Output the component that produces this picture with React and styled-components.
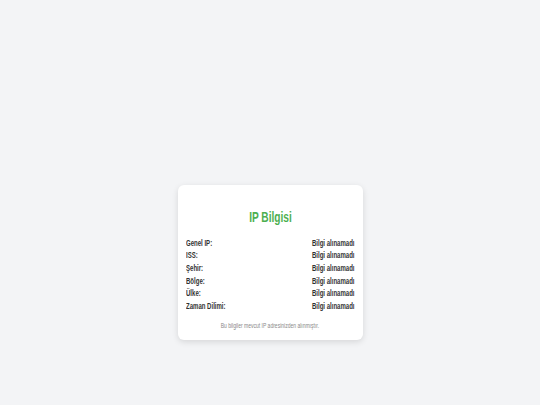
import React from 'react';
import styled, { createGlobalStyle } from 'styled-components';

const GlobalStyle = createGlobalStyle`
  html, body {
    margin: 0;
    padding: 0;
    background: #f3f4f6;
    font-family: "Liberation Sans Narrow", "Liberation Sans", Arial, sans-serif;
  }
`;

const Page = styled.div`
  min-height: 405px;
  display: flex;
  justify-content: center;
  align-items: flex-start;
  padding-top: 185px;
  box-sizing: border-box;
`;

const Card = styled.div`
  width: 185px;
  box-sizing: border-box;
  background: #ffffff;
  border-radius: 6px;
  box-shadow: 0 2px 6px rgba(0, 0, 0, 0.12);
  padding: 23px 8px 10px;
`;

// the reference uses a condensed face, so squeeze the text horizontally
const Squeezed = styled.span`
  display: inline-block;
  white-space: nowrap;
  transform: scaleX(${(p) => p.$scale || 0.67});
  transform-origin: ${(p) => p.$origin || 'left'} center;
`;

const Title = styled.h2`
  margin: 0 0 10.5px;
  text-align: center;
  color: #4caf50;
  font-size: 14.5px;
  font-weight: 700;
  line-height: 18px;
`;

const Row = styled.div`
  display: flex;
  justify-content: space-between;
  font-size: 9px;
  font-weight: 700;
  color: #333333;
  line-height: 12.7px;
`;

const Note = styled.p`
  margin: 8px 0 0;
  text-align: center;
  font-size: 6.5px;
  color: #888888;
  line-height: 9px;
`;

const rows = ['Genel IP:', 'ISS:', 'Şehir:', 'Bölge:', 'Ülke:', 'Zaman Dilimi:'];

export default function App() {
  return (
    <>
      <GlobalStyle />
      <Page>
        <Card>
          <Title>
            <Squeezed $scale={0.7} $origin="center">IP Bilgisi</Squeezed>
          </Title>
          {rows.map((label) => (
            <Row key={label}>
              <Squeezed>{label}</Squeezed>
              <Squeezed $origin="right">Bilgi alınamadı</Squeezed>
            </Row>
          ))}
          <Note>
            <Squeezed $scale={0.77} $origin="center">
              Bu bilgiler mevcut IP adresinizden alınmıştır.
            </Squeezed>
          </Note>
        </Card>
      </Page>
    </>
  );
}
